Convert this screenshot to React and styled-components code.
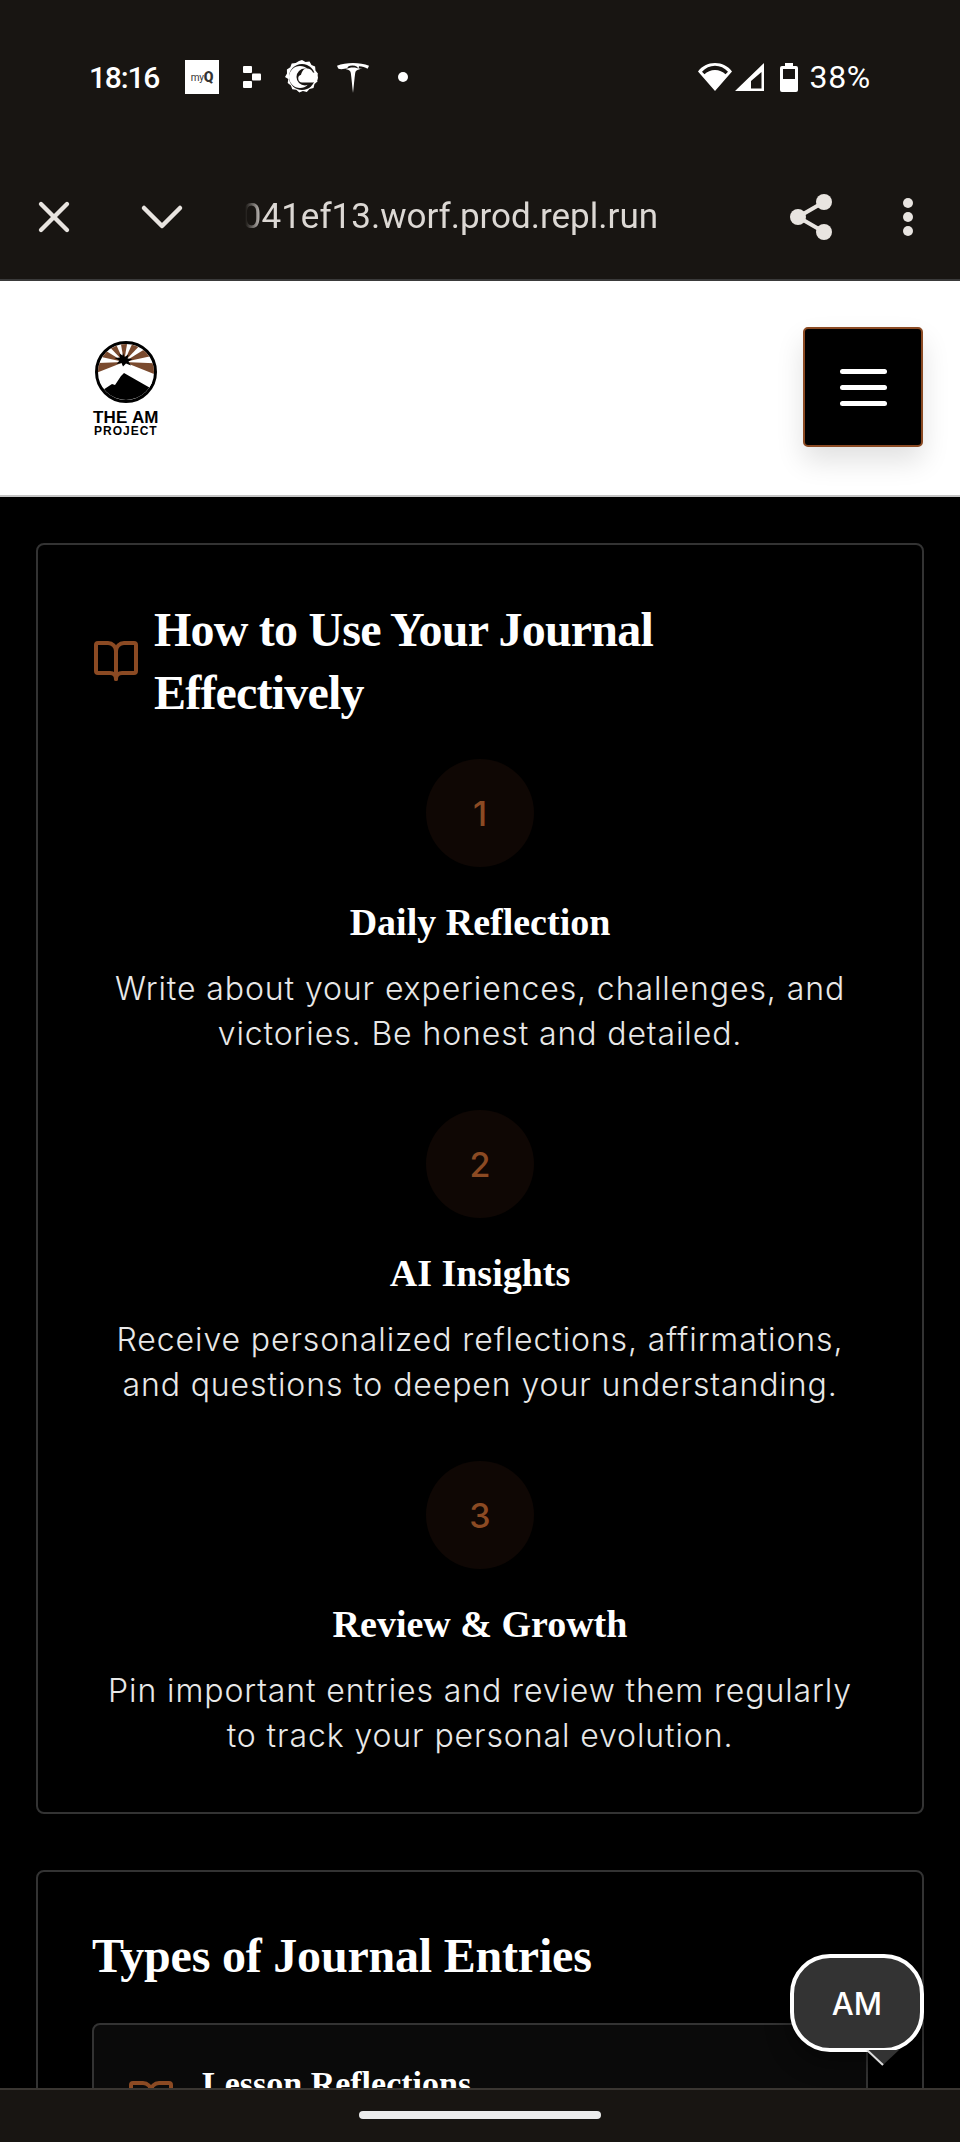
import React from "react";
import styled, { createGlobalStyle } from "styled-components";
import { BookOpen, X, ChevronDown } from "lucide-react";

const Global = createGlobalStyle`
  html, body {
    margin: 0;
    padding: 0;
    background: #000;
  }
  * {
    box-sizing: border-box;
  }
`;

const Shell = styled.div`
  position: relative;
  width: 960px;
  height: 2142px;
  display: flex;
  flex-direction: column;
  overflow: hidden;
  background: #000;
  font-family: Inter, "Noto Sans", sans-serif;
`;

const Chrome = styled.div`
  height: 281px;
  flex: none;
  background: #181512;
  border-bottom: 2px solid #3a3a3a;
`;

const StatusRow = styled.div`
  height: 154px;
  display: flex;
  align-items: center;
  padding: 0 89px;
  color: #fff;
  font-family: Roboto, sans-serif;
  font-size: 31px;
`;

const Clock = styled.span`
  width: 96px;
  font-size: 30px;
  font-weight: 500;
  letter-spacing: -1.2px;
`;

const NotifIcons = styled.div`
  display: flex;
  align-items: center;
  gap: 18px;
  flex: 1;
`;

const MyQ = styled.div`
  width: 34px;
  height: 34px;
  margin-right: 6px;
  background: #fff;
  color: #333;
  display: flex;
  align-items: center;
  justify-content: center;
  font-size: 10px;
  letter-spacing: -0.3px;
  b {
    font-size: 14px;
    font-weight: 900;
  }
`;

const Dot = styled.div`
  width: 10px;
  height: 10px;
  margin-left: 11px;
  border-radius: 50%;
  background: #fff;
`;

const SysIcons = styled.div`
  display: flex;
  align-items: center;
`;

const Percent = styled.span`
  margin-left: 11px;
  font-size: 32px;
  letter-spacing: 0.7px;
`;

const UrlRow = styled.div`
  height: 125px;
  display: flex;
  align-items: center;
  color: #e8e4e0;
  padding-left: 28px;
`;

const UrlText = styled.div`
  width: 413px;
  margin-left: 47px;
  overflow: hidden;
  white-space: nowrap;
  direction: rtl;
  text-align: left;
  font-family: Roboto, sans-serif;
  font-size: 35px;
  color: #dcd8d4;
  -webkit-mask-image: linear-gradient(90deg, transparent 0, #000 18px);
  mask-image: linear-gradient(90deg, transparent 0, #000 18px);
`;

const ChromeActions = styled.div`
  display: flex;
  align-items: center;
  margin-left: 132px;
  gap: 71px;
`;

const Header = styled.header`
  height: 216px;
  flex: none;
  display: flex;
  align-items: center;
  justify-content: space-between;
  padding: 0 37px 2px 93px;
  background: #fff;
  border-bottom: 2px solid #c4c4c4;
`;

const Logo = styled.div`
  display: flex;
  flex-direction: column;
  align-items: center;
  margin-top: 4px;
  color: #000;
  font-family: "Liberation Sans", sans-serif;
  font-weight: 700;
`;

const LogoTop = styled.span`
  margin-top: 6px;
  font-size: 17px;
  line-height: 17px;
  letter-spacing: 0.2px;
`;

const LogoBottom = styled.span`
  font-size: 12px;
  line-height: 11px;
  letter-spacing: 1px;
`;

const MenuButton = styled.button`
  width: 120px;
  height: 120px;
  padding: 0;
  display: flex;
  flex-direction: column;
  align-items: center;
  justify-content: center;
  gap: 11px;
  background: #000;
  border: 2px solid #8b4a23;
  border-radius: 5px;
  box-shadow: 0 14px 28px rgba(0, 0, 0, 0.12);
`;

const MenuBar = styled.span`
  display: block;
  width: 47px;
  height: 5px;
  border-radius: 3px;
  background: #fff;
`;

const Main = styled.main`
  flex: 1;
  min-height: 0;
  overflow: hidden;
  padding: 46px 36px 0;
  display: flex;
  flex-direction: column;
  gap: 56px;
`;

const Card = styled.section`
  flex: none;
  border: 2px solid #333;
  border-radius: 8px;
  padding: ${(p) => p.$padding};
`;

const GuideTitle = styled.div`
  display: flex;
  align-items: center;
  gap: 14px;
  margin-bottom: 35px;
  color: #8b4a23;
`;

const Title = styled.h2`
  margin: 0;
  font-family: "Liberation Serif", serif;
  font-weight: 700;
  font-size: 48px;
  line-height: 63px;
  letter-spacing: ${(p) => p.$spacing};
  color: #fff;
`;

const Steps = styled.div`
  display: flex;
  flex-direction: column;
  gap: 54px;
`;

const Step = styled.div`
  display: flex;
  flex-direction: column;
  align-items: center;
  text-align: center;
`;

const StepNumber = styled.div`
  width: 108px;
  height: 108px;
  border-radius: 50%;
  display: flex;
  align-items: center;
  justify-content: center;
  background: #0f0704;
  color: #8b4a23;
  font-size: 34px;
  font-weight: 500;
`;

const StepTitle = styled.h3`
  margin: 30px 0 19px;
  font-family: "Liberation Serif", serif;
  font-weight: 700;
  font-size: 38px;
  line-height: 50px;
  color: #fff;
`;

const StepText = styled.p`
  margin: 0;
  width: 780px;
  font-size: 32px;
  font-weight: 300;
  line-height: 45px;
  letter-spacing: 0.9px;
  color: #e8e8e8;
`;

const InnerCard = styled.div`
  margin-top: 36px;
  height: 240px;
  display: flex;
  align-items: flex-start;
  gap: 27px;
  padding: 34px 33px;
  background: #0a0a0a;
  border: 2px solid #333;
  border-radius: 8px;
  color: #8b4a23;
`;

const EntryIcon = styled(BookOpen)`
  flex: none;
  margin-top: 18px;
`;

const EntryTitle = styled.h3`
  margin: 0;
  font-family: "Liberation Serif", serif;
  font-weight: 700;
  font-size: 34px;
  line-height: 50px;
  color: #fff;
`;

const Bubble = styled.div`
  position: absolute;
  right: 36px;
  bottom: 90px;
  width: 134px;
  height: 98px;
  display: flex;
  align-items: center;
  justify-content: center;
  background: #333;
  border: 4px solid #fff;
  border-radius: 40px;
  color: #fff;
  font-size: 31px;
  font-weight: 500;
  box-shadow: 0 10px 24px rgba(0, 0, 0, 0.4);
`;

const BubbleTail = styled.svg`
  position: absolute;
  left: 72px;
  top: 92px;
`;

const BottomBar = styled.div`
  height: 54px;
  flex: none;
  display: flex;
  align-items: flex-start;
  justify-content: center;
  padding-top: 21px;
  background: #181512;
  border-top: 2px solid #3a3632;
`;

const HomePill = styled.div`
  width: 242px;
  height: 8px;
  border-radius: 4px;
  background: #ececec;
`;

const steps = [
  {
    n: 1,
    title: "Daily Reflection",
    text: "Write about your experiences, challenges, and victories. Be honest and detailed.",
  },
  {
    n: 2,
    title: "AI Insights",
    text: "Receive personalized reflections, affirmations, and questions to deepen your understanding.",
  },
  {
    n: 3,
    title: "Review & Growth",
    text: "Pin important entries and review them regularly to track your personal evolution.",
  },
];

const PixelIcon = () => (
  <svg width="18" height="22" viewBox="0 0 18 22" fill="#fff" style={{ marginRight: 6 }}>
    <rect x="0" y="0" width="9" height="7" rx="1" />
    <rect x="9" y="7.5" width="9" height="7" rx="1" />
    <rect x="0" y="15" width="9" height="7" rx="1" />
  </svg>
);

const SwirlIcon = () => (
  <svg width="34" height="34" viewBox="0 0 34 34">
    <path
      fill="#fff"
      d="M17 0l3.5 2 4-.5 2 3.4 3.6 1.600.4 4 2.500 3.300-1.500 3.700 1 3.900-3 2.600-1 3.900-4 1-2.700 3-3.900-1-3.600 1.500-3-2.600-4-.6-1.400-3.800-3.200-2.400.6-4L0 17l2-3.500-.1-4 3.400-2.200 1.400-3.800 4-.4L14 1z"
    />
    <circle cx="17" cy="17" r="13" fill="#181512" />
    <circle cx="15" cy="17" r="11" fill="#fff" />
    <circle cx="20" cy="17" r="8.500" fill="#181512" />
    <path
      fill="#fff"
      d="M21 8.500a7 7 0 0 1 7 4 5 5 0 0 1 5 5 5 5 0 0 1-5 5H17a4 4 0 0 1-1-7.800c1-3.500 3-6.200 5-6.200z"
    />
  </svg>
);

const TeslaIcon = () => (
  <svg width="32" height="31" viewBox="0 0 32 31" fill="#fff">
    <path d="M0 3.800C9 .2 23 .2 32 3.800c-.5 1.400-1 2.200-1.500 3-2.500-1.500-5-2.200-8.500-2.500 0 1.200-.3 2-.8 2.700 2.500-.1 4-.1 5.800.2-1.900-.6-4.500-.8-5.900-.8-.2-1.200-2-3-5.600-3S10.500 4.400 10.300 6.400c-1.400 0-4 .2-5.900.8L1.500 6.800C1 6 .5 5.200 0 3.800z" />
    <path d="M16 31c-.8-7-1.500-15-2.200-20-.3-2-1.800-3.200-4.800-3.700C11 6 13.500 5.500 16 5.500s5 .5 7 1.800c-3 .5-4.500 1.700-4.800 3.700-.7 5-1.400 13-2.200 20z" />
  </svg>
);

const WifiIcon = () => (
  <svg width="34" height="28" viewBox="0 0 34 28" fill="#fff">
    <path
      fillRule="evenodd"
      d="M17 28L0 8.500C4 3 10 0 17 0s13 3 17 8.500zM4 8.700l2.500 2.600C9 8.800 13 7 17 7s8 1.800 10.500 4.300L30 8.700C26.500 5 22 2.800 17 2.800S7.500 5 4 8.700z"
    />
  </svg>
);

const SignalIcon = () => (
  <svg width="29" height="28" viewBox="0 0 29 28" fill="#fff" style={{ marginLeft: 3 }}>
    <path fillRule="evenodd" d="M29 0v28H0zM26.500 9L16 18v7.500h10.500z" />
  </svg>
);

const BatteryIcon = () => (
  <svg width="18" height="29" viewBox="0 0 18 29" fill="#fff" style={{ marginLeft: 16 }}>
    <path
      fillRule="evenodd"
      d="M5 0h8v3h3a2 2 0 0 1 2 2v22a2 2 0 0 1-2 2H2a2 2 0 0 1-2-2V5a2 2 0 0 1 2-2h3zM3 6v10h12V6z"
    />
  </svg>
);

const ShareIcon = () => (
  <svg width="42" height="46" viewBox="0 0 42 46" fill="#e8e4e0">
    <circle cx="34" cy="8" r="8" />
    <circle cx="34" cy="38" r="8" />
    <circle cx="8" cy="23" r="8" />
    <path d="M8 23L34 8M8 23l26 15" stroke="#e8e4e0" strokeWidth="4" />
  </svg>
);

const DotsIcon = () => (
  <svg width="10" height="38" viewBox="0 0 10 38" fill="#e8e4e0">
    <circle cx="5" cy="5" r="5" />
    <circle cx="5" cy="19" r="5" />
    <circle cx="5" cy="33" r="5" />
  </svg>
);

// brown wedges of the sun, in degrees from straight up
const rays = [-102, -68, -34, 0, 34, 68, 102];

const LogoMark = () => (
  <svg width="62" height="62" viewBox="0 0 62 62">
    <defs>
      <clipPath id="logoDisc">
        <circle cx="31" cy="31" r="28" />
      </clipPath>
    </defs>
    <circle cx="31" cy="31" r="29.500" fill="#fff" stroke="#000" strokeWidth="3" />
    <g clipPath="url(#logoDisc)">
      {rays.map((a) => (
        <path key={a} d="M29 21L22 -20h14z" fill="#7a4a2e" transform={`rotate(${a} 29 21)`} />
      ))}
      <path d="M29 27L5 52h52L57 42z" fill="#fff" />
      <path d="M2 62V53l15-10 3 1 6-9 3-3 28 16v14z" fill="#000" />
    </g>
    <path d="M28 12l1.500 4 4-2.500-1 4 5 .5-4 2.500 2.500 4-5-2-3 3-1.500-3.500-5 1 3-3.500-5-2.500 5.500-.5-.5-4 3 2z" fill="#000" />
  </svg>
);

export default function App() {
  return (
    <Shell>
      <Global />
      <Chrome>
        <StatusRow>
          <Clock>18:16</Clock>
          <NotifIcons>
            <MyQ>
              my<b>Q</b>
            </MyQ>
            <PixelIcon />
            <SwirlIcon />
            <TeslaIcon />
            <Dot />
          </NotifIcons>
          <SysIcons>
            <WifiIcon />
            <SignalIcon />
            <BatteryIcon />
            <Percent>38%</Percent>
          </SysIcons>
        </StatusRow>
        <UrlRow>
          <X size={52} strokeWidth={2} />
          <ChevronDown size={72} strokeWidth={1.5} style={{ marginLeft: 46 }} />
          <UrlText>
            <bdi>041ef13.worf.prod.repl.run</bdi>
          </UrlText>
          <ChromeActions>
            <ShareIcon />
            <DotsIcon />
          </ChromeActions>
        </UrlRow>
      </Chrome>
      <Header>
        <Logo>
          <LogoMark />
          <LogoTop>THE AM</LogoTop>
          <LogoBottom>PROJECT</LogoBottom>
        </Logo>
        <MenuButton aria-label="Menu">
          <MenuBar />
          <MenuBar />
          <MenuBar />
        </MenuButton>
      </Header>
      <Main>
        <Card $padding="53px 54px 54px">
          <GuideTitle>
            <BookOpen size={48} strokeWidth={2} />
            <Title $spacing="-0.8px">
              How to Use Your Journal
              <br />
              Effectively
            </Title>
          </GuideTitle>
          <Steps>
            {steps.map((step) => (
              <Step key={step.n}>
                <StepNumber>{step.n}</StepNumber>
                <StepTitle>{step.title}</StepTitle>
                <StepText>{step.text}</StepText>
              </Step>
            ))}
          </Steps>
        </Card>
        <Card $padding="52px 54px 0">
          <Title $spacing="-0.2px">Types of Journal Entries</Title>
          <InnerCard>
            <EntryIcon size={48} strokeWidth={2} />
            <EntryTitle>Lesson Reflections</EntryTitle>
          </InnerCard>
        </Card>
      </Main>
      <BottomBar>
        <HomePill />
      </BottomBar>
      <Bubble>
        AM
        <BubbleTail width="34" height="16" viewBox="0 0 34 16">
          <path d="M1 0h32L17 15z" fill="#333" />
          <path d="M1 0l16 15" stroke="#ddd" strokeWidth="2" fill="none" />
        </BubbleTail>
      </Bubble>
    </Shell>
  );
}
